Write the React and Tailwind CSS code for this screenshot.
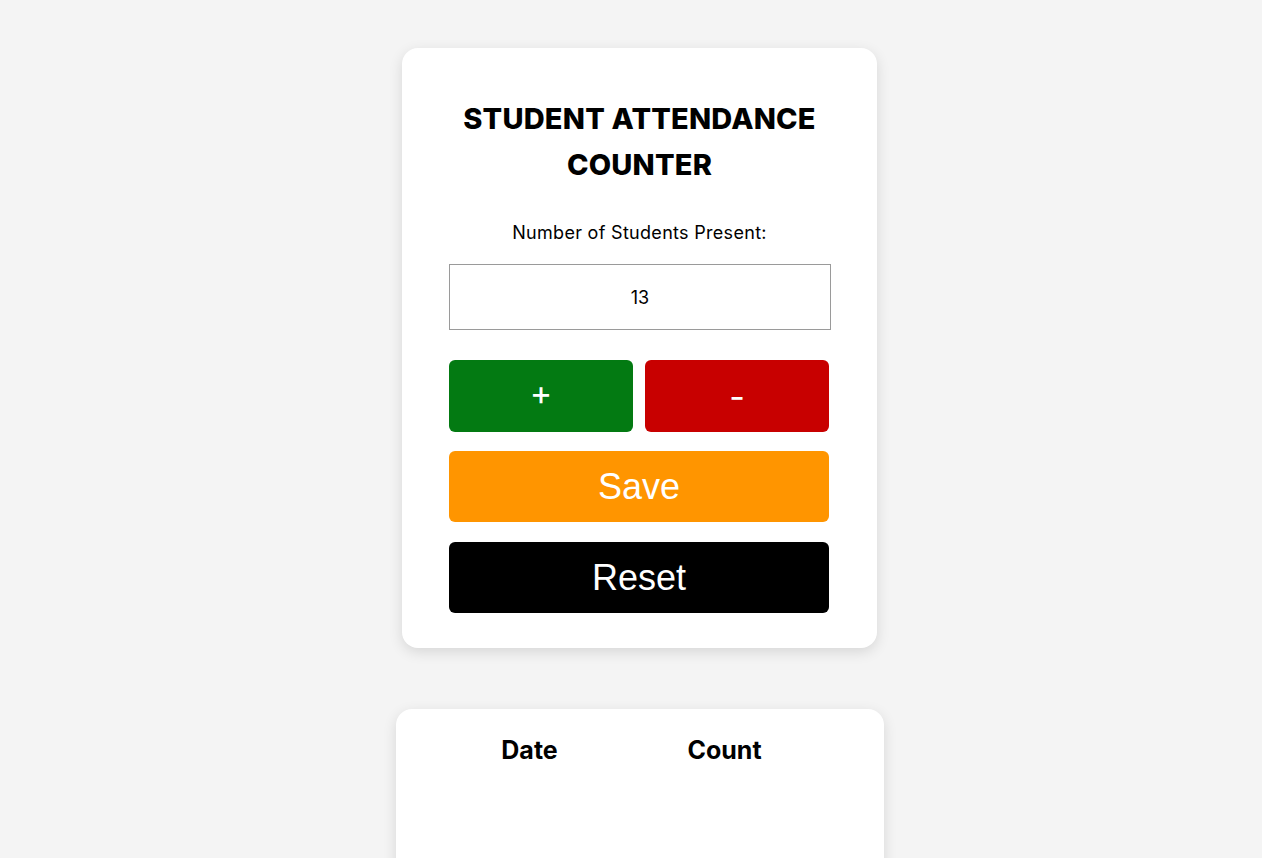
import { useState } from 'react';

export default function App() {
  const [count, setCount] = useState(13);

  return (
    <div className="h-[858px] bg-[#f4f4f4] flex flex-col items-center pt-[48px] pl-[17px] font-['Inter','Noto_Sans',sans-serif] text-black overflow-hidden">
      <div className="w-[475px] bg-white rounded-2xl shadow-[0_4px_14px_rgba(0,0,0,0.12)] px-[47px] pt-[48px] pb-[35px] flex flex-col">
        <h1 className="text-[29px] font-extrabold text-center leading-[46px] tracking-[0.2px]">
          STUDENT ATTENDANCE COUNTER
        </h1>
        <p className="text-[18px] text-center mt-[33px] leading-[24px] tracking-[0.3px]">Number of Students Present:</p>
        <input
          type="text"
          value={count}
          onChange={(e) => setCount(Number(e.target.value) || 0)}
          className="mt-[19px] w-[382px] h-[66px] border border-[#9a9a9a] text-center text-[18px] outline-none"
        />
        <div className="flex gap-[12px] mt-[30px] w-[380px]">
          <button
            onClick={() => setCount(count + 1)}
            className="flex-1 h-[72px] rounded-md bg-[#037a12] text-white text-[34px] font-normal pb-[8px]"
          >
            +
          </button>
          <button
            onClick={() => setCount(Math.max(0, count - 1))}
            className="flex-1 h-[72px] rounded-md bg-[#c80000] text-white text-[34px] font-normal"
          >
            -
          </button>
        </div>
        <button className="mt-[19px] w-[380px] h-[71px] rounded-md bg-[#ff9500] text-white text-[36px] font-['Liberation_Sans',Arial,sans-serif]">
          Save
        </button>
        <button
          onClick={() => setCount(0)}
          className="mt-[20px] w-[380px] h-[71px] rounded-md bg-black text-white text-[36px] font-['Liberation_Sans',Arial,sans-serif]"
        >
          Reset
        </button>
      </div>

      <div className="mt-[61px] w-[488px] h-[240px] shrink-0 bg-white rounded-2xl shadow-[0_4px_14px_rgba(0,0,0,0.12)] pt-[24px] pl-[37px]">
        <div className="flex">
          <div className="w-[194px] text-center text-[25px] font-bold leading-[34px]">Date</div>
          <div className="w-[196px] text-center text-[25px] font-bold leading-[34px]">Count</div>
        </div>
      </div>
    </div>
  );
}
